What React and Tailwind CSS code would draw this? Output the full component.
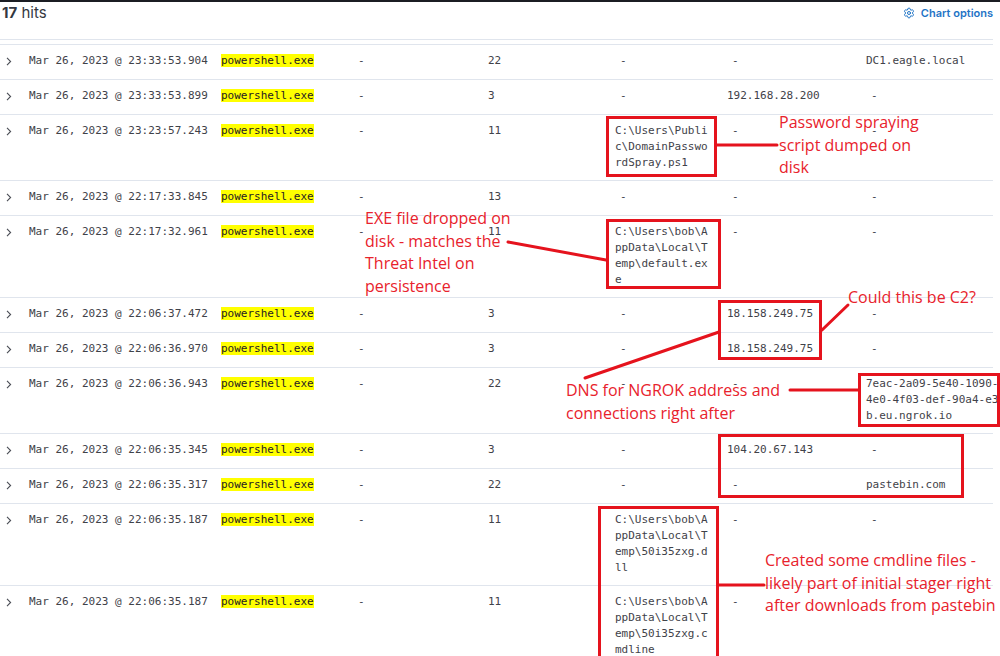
import React from "react";
import { Settings } from "lucide-react";

const rows = [
  { ts: "23:33:53.904", code: "22", cmd: "-", ip: "-", dns: "DC1.eagle.local" },
  { ts: "23:33:53.899", code: "3", cmd: "-", ip: "192.168.28.200", dns: "-" },
  { ts: "23:23:57.243", code: "11", cmd: "C:\\Users\\Public\\DomainPasswordSpray.ps1", ip: "-", dns: "-" },
  { ts: "22:17:33.845", code: "13", cmd: "-", ip: "-", dns: "-" },
  { ts: "22:17:32.961", code: "11", cmd: "C:\\Users\\bob\\AppData\\Local\\Temp\\default.exe", ip: "-", dns: "-" },
  { ts: "22:06:37.472", code: "3", cmd: "-", ip: "18.158.249.75", dns: "-" },
  { ts: "22:06:36.970", code: "3", cmd: "-", ip: "18.158.249.75", dns: "-" },
  { ts: "22:06:36.943", code: "22", cmd: "-", ip: "-", dns: "7eac-2a09-5e40-1090-4e0-4f03-def-90a4-e3b.eu.ngrok.io" },
  { ts: "22:06:35.345", code: "3", cmd: "-", ip: "104.20.67.143", dns: "-" },
  { ts: "22:06:35.317", code: "22", cmd: "-", ip: "-", dns: "pastebin.com" },
  { ts: "22:06:35.187", code: "11", cmd: "C:\\Users\\bob\\AppData\\Local\\Temp\\50i35zxg.dll", ip: "-", dns: "-" },
  { ts: "22:06:35.187", code: "11", cmd: "C:\\Users\\bob\\AppData\\Local\\Temp\\50i35zxg.cmdline", ip: "-", dns: "-" },
];

function Val({ v, w }) {
  if (v === "-") return <span className="pl-[5px]">-</span>;
  return <div className={`${w} break-all`}>{v}</div>;
}

function Chevron() {
  return (
    <svg width="6" height="9" viewBox="0 0 6 9" className="mt-[4px]">
      <polyline points="1,0.8 4.6,4.5 1,8.2" fill="none" stroke="#4a4d55" strokeWidth="1.1" />
    </svg>
  );
}

function Row({ r }) {
  return (
    <div className="flex w-[993px] min-h-[35px] border-b border-[#e0e5ed] pt-[8px] pb-[9px] text-[11px] leading-[16px] text-[#3f4249]">
      <div className="w-[29px] shrink-0 pl-[6px]">
        <Chevron />
      </div>
      <div className="w-[192px] shrink-0 whitespace-nowrap">Mar 26, 2023 @ {r.ts}</div>
      <div className="w-[132px] shrink-0">
        <span className="bg-[#ffff00] text-[#1f2024]">powershell.exe</span>
      </div>
      <div className="w-[135px] shrink-0">
        <span className="pl-[5px]">-</span>
      </div>
      <div className="w-[127px] shrink-0">{r.code}</div>
      <div className="w-[112px] shrink-0">
        <Val v={r.cmd} w="w-[93px]" />
      </div>
      <div className="w-[139px] shrink-0 whitespace-nowrap">
        <Val v={r.ip} w="w-[133px]" />
      </div>
      <div className="flex-1">
        <Val v={r.dns} w="w-[133px]" />
      </div>
    </div>
  );
}

const RED = "#e5131d";

export default function App() {
  return (
    <div className="relative w-[1000px] h-[656px] overflow-hidden bg-white">
      <div className="h-[2px] bg-[#1b1d23]" />
      <div className="h-[37px] flex justify-between items-start pt-[2px] w-[993px]" style={{ fontFamily: "Inter, 'Liberation Sans', sans-serif" }}>
        <div className="pl-[2px] text-[15px] leading-[18px] text-[#343741]">
          <span className="font-bold">17</span> hits
        </div>
        <div className="flex items-center gap-[6px] text-[11px] leading-[18px] font-semibold text-[#1f74c6]">
          <Settings size={12} strokeWidth={2} />
          <span>Chart options</span>
        </div>
      </div>
      <div style={{ fontFamily: "'DejaVu Sans Mono', 'Liberation Mono', monospace" }}>
        <div className="w-[993px] h-[6px] border-y border-[#e0e5ed]" />
        {rows.map((r, i) => (
          <Row key={i} r={r} />
        ))}
      </div>

      <svg className="absolute inset-0 pointer-events-none" width="1000" height="656" viewBox="0 0 1000 656">
        <g fill="none" stroke={RED} strokeWidth="3">
          <rect x="607.5" y="117.5" width="108" height="58" />
          <rect x="607.5" y="220.5" width="112" height="67" />
          <rect x="719.5" y="301.5" width="101" height="57" />
          <rect x="859.5" y="374.5" width="139" height="51" />
          <rect x="719.5" y="435.5" width="243" height="61" />
          <rect x="599.5" y="507.5" width="118" height="160" />
        </g>
        <g stroke={RED} strokeWidth="3" strokeLinecap="round">
          <line x1="717" y1="145" x2="777" y2="145" />
          <line x1="508" y1="242" x2="606" y2="260" />
          <line x1="822" y1="330" x2="848" y2="305" />
          <line x1="585" y1="378" x2="719" y2="332" />
          <line x1="790" y1="390" x2="859" y2="390" />
          <line x1="718" y1="585" x2="764" y2="585" />
        </g>
      </svg>

      <div
        className="absolute inset-0 pointer-events-none text-[16px] leading-[22.5px] text-[#e8222c]"
        style={{ fontFamily: "'Open Sans', 'Noto Sans', sans-serif" }}
      >
        <div className="absolute left-[779px] top-[111px]">
          Password spraying<br />script dumped on<br />disk
        </div>
        <div className="absolute left-[365px] top-[207px]">
          EXE file dropped on<br />disk - matches the<br />Threat Intel on<br />persistence
        </div>
        <div className="absolute left-[848px] top-[286px] whitespace-nowrap">Could this be C2?</div>
        <div className="absolute left-[566px] top-[379px] whitespace-nowrap">
          DNS for NGROK address and<br />connections right after
        </div>
        <div className="absolute left-[765px] top-[549px] whitespace-nowrap">
          Created some cmdline files -<br />likely part of initial stager right<br />after downloads from pastebin
        </div>
      </div>
    </div>
  );
}
